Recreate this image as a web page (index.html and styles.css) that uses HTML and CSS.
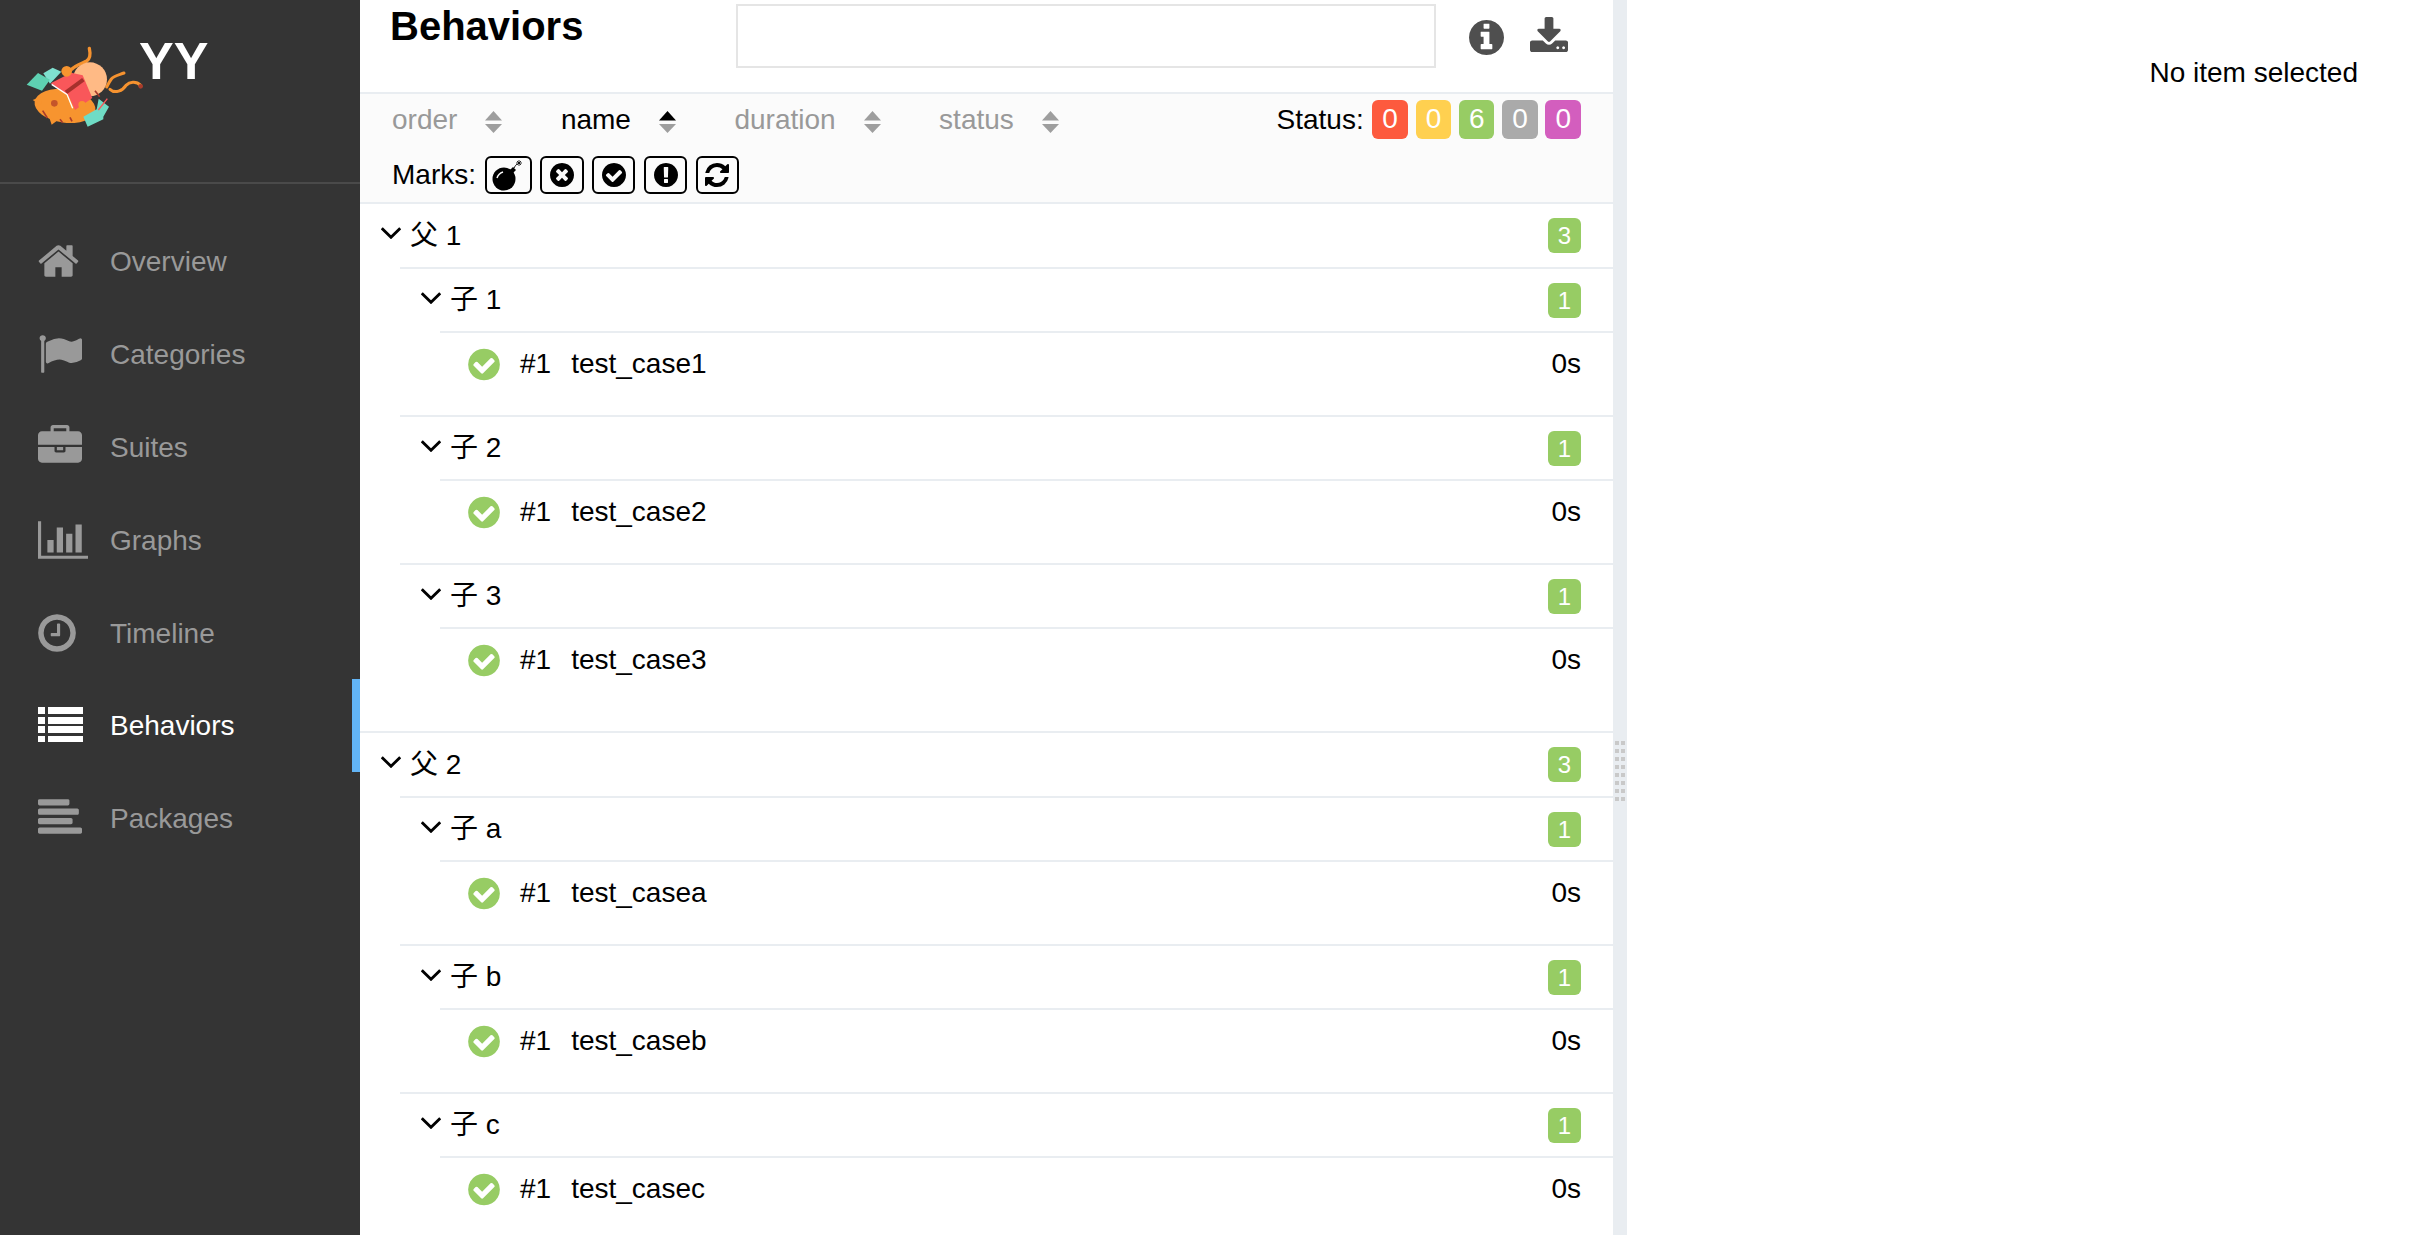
FILE: index.html
```html
<!DOCTYPE html>
<html lang="en">
<head>
    <meta charset="UTF-8">
    <meta name="viewport" content="width=device-width, initial-scale=1.0">
    <title>Behaviors</title>
    <link rel="stylesheet" href="styles.css">
</head>
<body>
    <svg class="defs">
        <symbol id="i-check" viewBox="128 0 1536 1792"><path d="M1412 734q0-28-18-46l-91-90q-19-19-45-19t-45 19l-408 407-226-226q-19-19-45-19t-45 19l-91 90q-18 18-18 46 0 27 18 45l362 362q19 19 45 19 27 0 46-19l543-543q18-18 18-45zm252 162q0 209-103 385.5t-279.5 279.5-385.5 103-385.5-103-279.5-279.5-103-385.5 103-385.5 279.5-279.5 385.5-103 385.5 103 279.5 279.5 103 385.5z"/></symbol>
        <symbol id="i-chevron" viewBox="0 0 20 12"><path d="M.8 1.2 10 10.300l9.200-9.100" fill="none" stroke="#000" stroke-width="2.800"/></symbol>
        <symbol id="i-sort" viewBox="0 0 17 22"><path d="M8.500 0 17 9.500H0z"/><path class="sort-down" d="M0 13h17l-8.500 9z"/></symbol>
    </svg>

    <aside class="sidebar">
        <div class="brand">
            <svg class="logo" viewBox="75 135 360 255">
                <path d="M330 268c15 14 38 4 48-12 10-10 30-14 44 0" fill="none" stroke="#f5922f" stroke-width="9" stroke-linecap="round"/>
                <circle cx="422" cy="259" r="7" fill="#a83c2c"/>
                <path d="M268 145c4 18 4 30-8 38-14 8-32 12-44 24" fill="none" stroke="#f5922f" stroke-width="10" stroke-linecap="round"/>
                <path d="M372 219c-16 6-30 8-38 18-6 8-10 16-14 24" fill="none" stroke="#f5922f" stroke-width="9" stroke-linecap="round"/>
                <path d="m130 220 28-17 26 12-34 36z" fill="#7fe0cf"/>
                <path d="m80 254 34-35 36 20-24 33z" fill="#5ed1b2"/>
                <circle cx="270" cy="238" r="51" fill="#ffba85"/>
                <ellipse cx="195" cy="318" rx="92" ry="50" transform="rotate(8 195 318)" fill="#f7942f"/>
                <path d="m98 300 30-12-6 26zM155 374l-8-24 24 12z" fill="#f7942f"/>
                <path d="m152 250 62-32 34 8 29 68-52 36-20-45z" fill="#f9575a"/>
                <path d="m198 277 52-38" stroke="#a6302c" stroke-width="12"/>
                <path d="m155 253 46 30 17 42" fill="none" stroke="#fff" stroke-width="4"/>
                <circle cx="200" cy="214" r="16" fill="#f7942f"/>
                <path d="m250 350 40-22 6-32 31 24-17 30 0 8-47 22z" fill="#6fdcc5"/>
                <circle cx="246" cy="314" r="11" fill="#f7942f"/>
                <circle cx="163" cy="310" r="10" fill="#c4552a"/>
                <path d="M128 332l14 22M180 358l8 10M210 352l6 12M285 272l14 18" stroke="#a83c2c" stroke-width="5"/>
                <path d="m295 330 27-34" stroke="#f9575a" stroke-width="4"/>
            </svg>
            <span class="brand-name">YY</span>
        </div>
        <nav class="nav">
            <a class="nav-item">
                <span class="nav-icon"><svg width="41" height="44" viewBox="64 0 1664 1792"><path d="M1472 992v480q0 26-19 45t-45 19h-384v-384h-256v384h-384q-26 0-45-19t-19-45v-480q0-1 .5-3t.5-3l575-474 575 474q1 2 1 6zm223-69l-62 74q-8 9-21 11h-3q-13 0-21-7l-692-577-692 577q-12 8-24 7-13-2-21-11l-62-74q-8-10-7-23.5t11-21.500l719-599q32-26 76-26t76 26l244 204v-195q0-14 9-23t23-9h192q14 0 23 9t9 23v408l219 182q10 8 11 21.500t-7 23.500z"/></svg></span>
                Overview
            </a>
            <a class="nav-item">
                <span class="nav-icon"><svg width="44" height="44" viewBox="0 0 1792 1792"><path d="M320 256q0 72-64 110v1266q0 13-9.500 22.500t-22.500 9.500h-64q-13 0-22.500-9.500t-9.500-22.500v-1266q-64-38-64-110 0-53 37.500-90.500t90.500-37.500 90.500 37.500 37.500 90.500zm1472 64v763q0 25-12.500 38.500t-39.500 27.500q-215 116-369 116-61 0-123.500-22t-108.500-48-115.500-48-142.500-22q-192 0-464 146-17 9-33 9-26 0-45-19t-19-45v-742q0-32 31-55 21-14 79-43 236-120 421-120 107 0 200 29t219 88q38 19 88 19 54 0 117.500-21t110-47 88-47 54.500-21q26 0 45 19t19 45z"/></svg></span>
                Categories
            </a>
            <a class="nav-item">
                <span class="nav-icon"><svg width="44" height="44" viewBox="0 0 1792 1792"><path d="M640 256h512v-128h-512v128zm1152 640v480q0 66-47 113t-113 47h-1472q-66 0-113-47t-47-113v-480h672v160q0 26 19 45t45 19h320q26 0 45-19t19-45v-160h672zm-768 0v128h-256v-128h256zm768-480v384h-1792v-384q0-66 47-113t113-47h352v-160q0-40 28-68t68-28h576q40 0 68 28t28 68v160h352q66 0 113 47t47 113z"/></svg></span>
                Suites
            </a>
            <a class="nav-item">
                <span class="nav-icon"><svg width="50" height="44" viewBox="0 0 2048 1792"><path d="M640 896v512h-256v-512h256zm384-512v1024h-256v-1024h256zm1024 1152v128h-2048v-1536h128v1408h1920zm-640-896v768h-256v-768h256zm384-384v1152h-256v-1152h256z"/></svg></span>
                Graphs
            </a>
            <a class="nav-item">
                <span class="nav-icon"><svg width="38" height="44" viewBox="128 0 1536 1792"><path d="M1024 544v448q0 14-9 23t-23 9h-320q-14 0-23-9t-9-23v-64q0-14 9-23t23-9h224v-352q0-14 9-23t23-9h64q14 0 23 9t9 23zm416 352q0-148-73-273t-198-198-273-73-273 73-198 198-73 273 73 273 198 198 273 73 273-73 198-198 73-273zm224 0q0 209-103 385.500t-279.500 279.500-385.500 103-385.500-103-279.500-279.500-103-385.500 103-385.500 279.500-279.500 385.500-103 385.500 103 279.500 279.500 103 385.500z"/></svg></span>
                Timeline
            </a>
            <a class="nav-item active">
                <span class="nav-icon"><svg width="45" height="36" viewBox="0 0 45 36"><path d="M0 0h7v7H0zM10 0h35v7H10zM0 10h7v7H0zM10 10h35v7H10zM0 19h7v7H0zM10 19h35v7H10zM0 29h7v6H0zM10 29h35v6H10z"/></svg></span>
                Behaviors
            </a>
            <a class="nav-item">
                <span class="nav-icon"><svg width="44" height="44" viewBox="0 0 1792 1792"><path d="M1792 1344v128q0 26-19 45t-45 19h-1664q-26 0-45-19t-19-45v-128q0-26 19-45t45-19h1664q26 0 45 19t19 45zm-384-384v128q0 26-19 45t-45 19h-1280q-26 0-45-19t-19-45v-128q0-26 19-45t45-19h1280q26 0 45 19t19 45zm256-384v128q0 26-19 45t-45 19h-1536q-26 0-45-19t-19-45v-128q0-26 19-45t45-19h1536q26 0 45 19t19 45zm-384-384v128q0 26-19 45t-45 19h-1152q-26 0-45-19t-19-45v-128q0-26 19-45t45-19h1152q26 0 45 19t19 45z"/></svg></span>
                Packages
            </a>
        </nav>
    </aside>

    <main class="main">
        <header class="header">
            <h2 class="title">Behaviors</h2>
            <input class="search" type="text">
            <svg class="tool-icon info" width="35" height="41" viewBox="128 0 1536 1792"><path d="M1152 1376v-160q0-14-9-23t-23-9h-96v-512q0-14-9-23t-23-9h-320q-14 0-23 9t-9 23v160q0 14 9 23t23 9h96v320h-96q-14 0-23 9t-9 23v160q0 14 9 23t23 9h448q14 0 23-9t9-23zm-128-896v-160q0-14-9-23t-23-9h-192q-14 0-23 9t-9 23v160q0 14 9 23t23 9h192q14 0 23-9t9-23zm640 416q0 209-103 385.500t-279.500 279.500-385.500 103-385.500-103-279.500-279.500-103-385.500 103-385.500 279.500-279.500 385.500-103 385.500 103 279.500 279.500 103 385.500z"/></svg>
            <svg class="tool-icon" width="38" height="41" viewBox="64 0 1664 1792"><path d="M1344 1344q0-26-19-45t-45-19-45 19-19 45 19 45 45 19 45-19 19-45zm256 0q0-26-19-45t-45-19-45 19-19 45 19 45 45 19 45-19 19-45zm128-224v320q0 40-28 68t-68 28h-1472q-40 0-68-28t-28-68v-320q0-40 28-68t68-28h465l135 136q58 56 136 56t136-56l136-136h464q40 0 68 28t28 68zm-325-569q17 41-14 70l-448 448q-18 19-45 19t-45-19l-448-448q-31-29-14-70 17-39 59-39h256v-448q0-26 19-45t45-19h256q26 0 45 19t19 45v448h256q42 0 59 39z"/></svg>
        </header>

        <div class="filters">
            <div class="filter-row">
                <div class="sorters">
                    <span class="sorter">order <svg class="sort-icon"><use href="#i-sort"/></svg></span>
                    <span class="sorter on">name <svg class="sort-icon"><use href="#i-sort"/></svg></span>
                    <span class="sorter">duration <svg class="sort-icon"><use href="#i-sort"/></svg></span>
                    <span class="sorter">status <svg class="sort-icon"><use href="#i-sort"/></svg></span>
                </div>
                <div class="status">
                    <span class="status-label">Status:</span>
                    <span class="pill failed">0</span>
                    <span class="pill broken">0</span>
                    <span class="pill passed">6</span>
                    <span class="pill skipped">0</span>
                    <span class="pill unknown">0</span>
                </div>
            </div>
            <div class="marks">
                <span>Marks:</span>
                <button class="mark wide">
                    <svg width="32" height="32" viewBox="0 0 32 32"><circle cx="12" cy="20" r="11.500"/><path d="m18 11 3-3 3 3-3 3z"/><path d="M22 9c1-2 2-3 3-4" fill="none" stroke="#000" stroke-width="1"/><path d="M27 1v6M24 4h6M25 2l4 4M29 2l-4 4" stroke="#000" stroke-width=".8"/><path d="M5 19c1-3 3-5 6-6" fill="none" stroke="#fbfbfb" stroke-width="1.500"/></svg>
                </button>
                <button class="mark">
                    <svg width="24" height="28" viewBox="128 0 1536 1792"><path d="M1277 1122q0-26-19-45l-181-181 181-181q19-19 19-45 0-27-19-46l-90-90q-19-19-46-19-26 0-45 19l-181 181-181-181q-19-19-45-19-27 0-46 19l-90 90q-19 19-19 46 0 26 19 45l181 181-181 181q-19 19-19 45 0 27 19 46l90 90q19 19 46 19 26 0 45-19l181-181 181 181q19 19 45 19 27 0 46-19l90-90q19-19 19-46zm387-226q0 209-103 385.500t-279.500 279.500-385.500 103-385.500-103-279.500-279.500-103-385.500 103-385.500 279.500-279.500 385.500-103 385.500 103 279.500 279.500 103 385.500z"/></svg>
                </button>
                <button class="mark">
                    <svg width="24" height="28"><use href="#i-check"/></svg>
                </button>
                <button class="mark">
                    <svg width="24" height="28" viewBox="128 0 1536 1792"><path d="M896 128q209 0 385.500 103t279.500 279.500 103 385.500-103 385.500-279.500 279.500-385.500 103-385.500-103-279.500-279.500-103-385.500 103-385.500 279.500-279.500 385.500-103zm128 1247v-190q0-14-9-23.500t-22-9.500h-192q-13 0-23 10t-10 23v190q0 13 10 23t23 10h192q13 0 22-9.500t9-23.500zm-2-344l18-621q0-12-10-18-10-8-24-8h-220q-14 0-24 8-10 6-10 18l17 621q0 10 10 17.500t24 7.500h185q14 0 23.500-7.500t10.500-17.500z"/></svg>
                </button>
                <button class="mark">
                    <svg width="24" height="28" viewBox="128 0 1536 1792"><path d="M1639 1056q0 5-1 7-64 268-268 434.500t-478 166.500q-146 0-282.500-55t-243.500-157l-129 129q-19 19-45 19t-45-19-19-45v-448q0-26 19-45t45-19h448q26 0 45 19t19 45-19 45l-137 137q71 66 161 102t187 36q134 0 250-65t186-179q11-17 53-117 8-23 30-23h192q13 0 22.500 9.500t9.500 22.500zm25-800v448q0 26-19 45t-45 19h-448q-26 0-45-19t-19-45 19-45l138-138q-148-137-349-137-134 0-250 65t-186 179q-11 17-53 117-8 23-30 23h-199q-13 0-22.500-9.500t-9.500-22.500v-7q65-268 270-434.500t480-166.500q146 0 284 55.500t245 156.500l130-129q19-19 45-19t45 19 19 45z"/></svg>
                </button>
            </div>
        </div>

        <div class="tree">
            <section class="group">
                <div class="head"><svg class="chevron"><use href="#i-chevron"/></svg><span class="name">父 1</span><span class="count">3</span></div>
                <section class="sub">
                    <div class="head"><svg class="chevron"><use href="#i-chevron"/></svg><span class="name">子 1</span><span class="count">1</span></div>
                    <div class="case"><svg class="case-icon"><use href="#i-check"/></svg><span class="order">#1</span><span class="name">test_case1</span><span class="time">0s</span></div>
                </section>
                <section class="sub">
                    <div class="head"><svg class="chevron"><use href="#i-chevron"/></svg><span class="name">子 2</span><span class="count">1</span></div>
                    <div class="case"><svg class="case-icon"><use href="#i-check"/></svg><span class="order">#1</span><span class="name">test_case2</span><span class="time">0s</span></div>
                </section>
                <section class="sub">
                    <div class="head"><svg class="chevron"><use href="#i-chevron"/></svg><span class="name">子 3</span><span class="count">1</span></div>
                    <div class="case"><svg class="case-icon"><use href="#i-check"/></svg><span class="order">#1</span><span class="name">test_case3</span><span class="time">0s</span></div>
                </section>
            </section>
            <section class="group">
                <div class="head"><svg class="chevron"><use href="#i-chevron"/></svg><span class="name">父 2</span><span class="count">3</span></div>
                <section class="sub">
                    <div class="head"><svg class="chevron"><use href="#i-chevron"/></svg><span class="name">子 a</span><span class="count">1</span></div>
                    <div class="case"><svg class="case-icon"><use href="#i-check"/></svg><span class="order">#1</span><span class="name">test_casea</span><span class="time">0s</span></div>
                </section>
                <section class="sub">
                    <div class="head"><svg class="chevron"><use href="#i-chevron"/></svg><span class="name">子 b</span><span class="count">1</span></div>
                    <div class="case"><svg class="case-icon"><use href="#i-check"/></svg><span class="order">#1</span><span class="name">test_caseb</span><span class="time">0s</span></div>
                </section>
                <section class="sub">
                    <div class="head"><svg class="chevron"><use href="#i-chevron"/></svg><span class="name">子 c</span><span class="count">1</span></div>
                    <div class="case"><svg class="case-icon"><use href="#i-check"/></svg><span class="order">#1</span><span class="name">test_casec</span><span class="time">0s</span></div>
                </section>
            </section>
        </div>
    </main>

    <div class="splitter"><div class="handle"></div></div>

    <div class="details">No item selected</div>
</body>
</html>
```

FILE: styles.css
```css
* {
    box-sizing: border-box;
}

body {
    margin: 0;
    height: 100vh;
    display: flex;
    overflow: hidden;
    font-family: "Liberation Sans", "Noto Sans CJK SC", sans-serif;
    font-size: 28px;
    color: #000;
    background-color: #fff;
}

.defs {
    display: none;
}

/* sidebar */
.sidebar {
    flex: 0 0 360px;
    background-color: #343434;
    color: #999;
}

.brand {
    height: 184px;
    display: flex;
    align-items: flex-start;
    border-bottom: 2px solid #4a4a4a;
    padding: 45px 0 0 25px;
}

.logo {
    width: 120px;
    height: 85px;
    flex-shrink: 0;
}

.brand-name {
    margin: -14px 0 0 -6px;
    font-size: 52px;
    font-weight: bold;
    line-height: 60px;
    color: #fff;
}

.nav {
    margin-top: 31px;
}

.nav-item {
    height: 92.800px;
    display: flex;
    align-items: center;
    padding: 2px 0 0 38px;
    fill: #999;
}

.nav-item.active {
    color: #fff;
    fill: #fff;
    border-right: 8px solid #62b4f5;
}

.nav-icon {
    width: 72px;
    margin-top: -2px;
    display: flex;
    align-items: center;
}

/* main column */
.main {
    flex: 0 0 1253px;
    height: 100vh;
    overflow: hidden;
}

.header {
    height: 94px;
    display: flex;
    align-items: flex-start;
    border-bottom: 2px solid #e9edf1;
}

.title {
    flex: 0 0 376px;
    margin: 0;
    padding: 0 0 0 30px;
    font-size: 40px;
    line-height: 52px;
}

.search {
    width: 700px;
    height: 64px;
    margin-top: 4px;
    border: 2px solid #e5e5e5;
    background: #fff;
    outline: none;
}

.tool-icon {
    margin: 17px 0 0 26px;
    fill: #4f4f4f;
}

.tool-icon.info {
    margin-left: 33px;
}

.filters {
    height: 108px;
    padding: 6px 32px 0;
    background-color: #fbfbfb;
}

.filter-row {
    display: flex;
    justify-content: space-between;
}

.sorters {
    display: flex;
    gap: 58.500px;
    line-height: 39px;
}

.sorter {
    display: flex;
    align-items: center;
    gap: 28px;
    color: #999;
    fill: #9e9e9e;
}

.sorter.on {
    color: #000;
    fill: #000;
}

.sort-icon {
    width: 17px;
    height: 22px;
    margin-top: 4px;
}

.sort-down {
    fill: #9e9e9e;
}

.status {
    display: flex;
    align-items: center;
    gap: 7.700px;
}

.status-label {
    margin-right: 1px;
}

.pill {
    height: 39px;
    padding: 0 10px;
    line-height: 37px;
    border-radius: 6px;
    color: #fff;
}

.failed {
    background-color: #fd5a3e;
}

.broken {
    background-color: #ffd050;
}

.passed {
    background-color: #97cc64;
}

.skipped {
    background-color: #aaa;
}

.unknown {
    background-color: #d35ebe;
}

.marks {
    display: flex;
    align-items: center;
    gap: 8.500px;
    margin-top: 17px;
}

.mark {
    width: 43.300px;
    height: 38px;
    padding: 0;
    display: flex;
    align-items: center;
    justify-content: center;
    border: 2px solid #000;
    border-radius: 6px;
    background: transparent;
}

.mark.wide {
    width: 47.400px;
}

/* tree */
.group {
    border-top: 2px solid #e9edf1;
    padding-bottom: 20px;
}

.sub {
    margin-left: 40px;
    border-top: 2px solid #e9edf1;
}

.head {
    height: 63px;
    display: flex;
    align-items: center;
    padding: 0 32px 0 21px;
}

.sub .head {
    height: 62px;
}

.chevron {
    width: 20px;
    height: 12px;
    margin: -5px 9px 0 0;
}

.head .name {
    flex: 1;
    margin-bottom: 6px;
}

.count {
    width: 33px;
    height: 35px;
    font-size: 24px;
    line-height: 35px;
    text-align: center;
    border-radius: 6px;
    color: #fff;
    background-color: #97cc64;
}

.case {
    height: 62px;
    margin: 0 0 20px 40px;
    box-sizing: content-box;
    display: flex;
    align-items: center;
    padding: 0 32px 0 28px;
    border-top: 2px solid #e9edf1;
}

.case-icon {
    width: 32px;
    height: 37px;
    fill: #97cc64;
}

.order {
    margin: 0 20px;
}

.case .name {
    flex: 1;
}

/* splitter and right pane */
.splitter {
    flex: 0 0 14px;
    padding: 741px 2px 0;
    background-color: #e9edf1;
}

.handle {
    width: 10px;
    height: 60px;
    background-image: linear-gradient(90deg, transparent 4px, #e9edf1 4px), linear-gradient(#c9c9c9 4px, transparent 4px);
    background-size: 6px 8px;
}

.details {
    flex: 1;
    padding: 57px 61px 0 0;
    line-height: 32px;
    text-align: right;
}
```
